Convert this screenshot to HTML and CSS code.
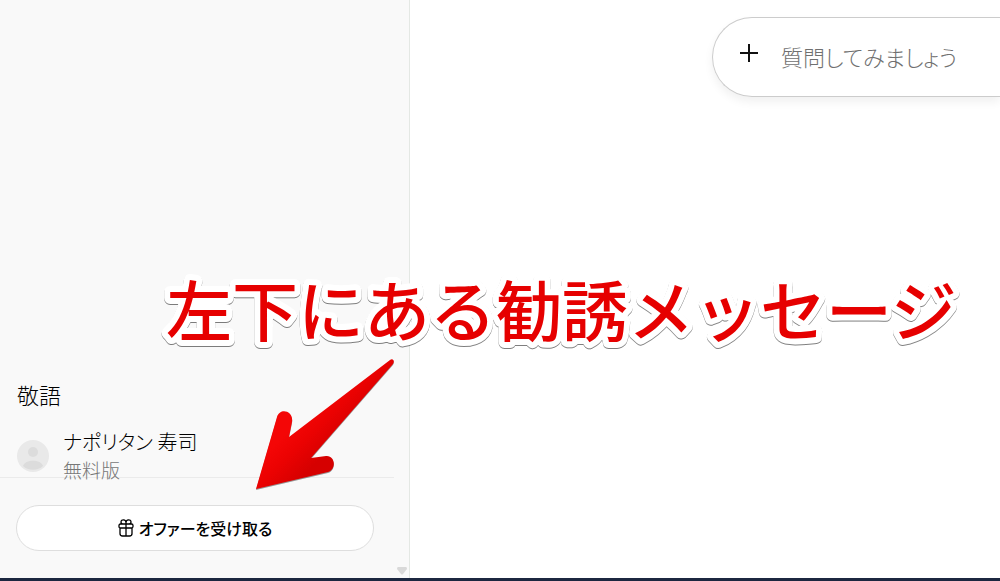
FILE: index.html
```html
<!DOCTYPE html>
<html lang="ja">
<head>
    <meta charset="UTF-8">
    <meta name="viewport" content="width=device-width, initial-scale=1.0">
    <title>チャット</title>
    <link rel="stylesheet" href="styles.css">
</head>
<body>
    <div class="app">
        <aside class="sidebar">
            <div class="sidebar-content">
                <a class="history" href="#">敬語</a>
                <div class="profile">
                    <svg class="avatar" viewBox="0 0 32 32" aria-hidden="true">
                        <circle cx="16" cy="16" r="16" fill="#e9e9e9"/>
                        <circle cx="16" cy="12" r="5" fill="#dcdcdc"/>
                        <path d="M6 26c2-7 18-7 20 0-5 5-15 5-20 0z" fill="#dcdcdc"/>
                    </svg>
                    <div class="profile-text">
                        <div class="name">ナポリタン 寿司</div>
                        <div class="plan">無料版</div>
                    </div>
                </div>
                <div class="offer">
                    <button class="offer-button" type="button">
                        <svg class="gift" viewBox="0 0 16 18" aria-hidden="true">
                            <path d="M2.500 5h11q1.500 0 1.500 1.500v1q0 1.500-1.500 1.500h-11Q1 9 1 7.500v-1Q1 5 2.500 5zM2 9v5.500q0 2.500 2.500 2.500h7q2.500 0 2.500-2.500V9M8 5v12M8 5V3.500C8 0 3 0 3 3q0 2 2 2M8 3.500C8 0 13 0 13 3q0 2-2 2"/>
                        </svg>
                        <span>オファーを受け取る</span>
                    </button>
                </div>
            </div>
            <div class="scrollbar">
                <svg viewBox="0 0 10 8" aria-hidden="true"><path d="M1 0h8q1 0 1 2L6 7q-1 1-2 0L0 2q0-2 1-2z"/></svg>
            </div>
        </aside>
        <main>
            <form class="composer">
                <button class="add" type="button" aria-label="追加">
                    <svg viewBox="0 0 20 20" aria-hidden="true"><path d="M10 1v18M1 10h18"/></svg>
                </button>
                <input type="text" aria-label="質問" placeholder="質問してみましょう">
            </form>
        </main>
    </div>

    <!-- 注釈 -->
    <svg class="note" viewBox="0 0 800 96">
        <text x="0" y="73">左下にある勧誘メッセージ</text>
    </svg>
    <svg class="arrow" viewBox="0 0 140 134" aria-hidden="true">
        <defs>
            <linearGradient id="red" gradientUnits="userSpaceOnUse" x1="48" y1="58" x2="78" y2="88">
                <stop offset="0" stop-color="#f40606"/>
                <stop offset="0.4" stop-color="#ec0202"/>
                <stop offset="1" stop-color="#d60000"/>
            </linearGradient>
        </defs>
        <path fill="url(#red)" d="M0 132L21 60C24 50 38 54 36 65L33 80L134 3C137 1 139 4 137 7L55 101L70 99C79 98 81 112 72 115Z"/>
    </svg>
</body>
</html>
```

FILE: styles.css
```css
* {
    box-sizing: border-box;
}

body {
    display: flex;
    flex-direction: column;
    min-height: 100vh;
    margin: 0;
    overflow: hidden;
    border-bottom: 3px solid #1c2740;
    background: #fff;
    color: #000;
    font-family: "Noto Sans CJK JP", sans-serif;
    font-weight: 300;
    font-feature-settings: "palt";
}

button,
input {
    font: inherit;
    font-feature-settings: inherit;
    color: inherit;
}

.app {
    display: flex;
    flex: 1;
}

/* サイドバー */
.sidebar {
    display: flex;
    flex: 0 0 410px;
    align-items: flex-end;
    border-right: 1px solid #e4e8e4;
    background: #f9f9f9;
}

.sidebar-content {
    flex: 1;
}

.history {
    display: block;
    padding: 0 17px;
    color: inherit;
    font-size: 22px;
    line-height: 32px;
    text-decoration: none;
}

.profile {
    display: flex;
    align-items: flex-end;
    gap: 14px;
    height: 67px;
    padding: 0 17px 5px;
}

.avatar {
    width: 32px;
    height: 32px;
}

.profile-text {
    height: 44px;
}

.name {
    font-size: 20px;
    line-height: 28px;
}

.plan {
    color: #777;
    font-size: 19px;
    line-height: 28px;
}

.offer {
    padding: 27px 20px 27px 16px;
    border-top: 1px solid #ebebeb;
}

.offer-button {
    display: flex;
    align-items: center;
    justify-content: center;
    gap: 5px;
    width: 100%;
    height: 46px;
    padding: 0;
    border: 1px solid #dedede;
    border-radius: 23px;
    background: #fff;
    font-size: 16px;
    font-weight: 500;
}

.gift {
    width: 16px;
    height: 18px;
    fill: none;
    stroke: #000;
    stroke-width: 1.3;
}

.scrollbar {
    width: 15px;
    padding: 0 2px 3px 3px;
}

.scrollbar svg {
    display: block;
    width: 10px;
    height: 8px;
    fill: #d9d9d9;
}

/* メイン */
main {
    flex: 1;
    min-width: 0;
    padding-top: 17px;
    padding-left: 302px;
}

.composer {
    display: flex;
    align-items: center;
    height: 80px;
    padding-left: 26px;
    border: 1px solid #ccc;
    border-right: 0;
    border-radius: 40px 0 0 40px;
    box-shadow: 0 5px 10px rgba(0, 0, 0, 0.06);
}

.add {
    padding: 0 0 8px;
    border: 0;
    background: none;
}

.add svg {
    display: block;
    width: 20px;
    height: 20px;
    stroke: #111;
    stroke-width: 2;
}

.composer input {
    flex: 1;
    min-width: 0;
    padding: 0 0 2px 22px;
    border: 0;
    outline: 0;
    background: none;
    font-size: 22px;
}

.composer input::placeholder {
    color: #707070;
    opacity: 1;
}

/* 画面に重ねる注釈 */
.note {
    position: absolute;
    top: 263px;
    left: 166px;
    width: 800px;
    height: 96px;
    overflow: visible;
    fill: #e60000;
    stroke: #fff;
    stroke-width: 12px;
    stroke-linejoin: round;
    paint-order: stroke fill;
    font-size: 66px;
    font-weight: 500;
    font-feature-settings: normal;
    filter: drop-shadow(0 1px 0 rgba(0, 0, 0, 0.5));
}

.arrow {
    position: absolute;
    top: 357px;
    left: 256px;
    width: 140px;
    height: 134px;
    filter: drop-shadow(0 1px 0 rgba(0, 0, 0, 0.4));
}
```
